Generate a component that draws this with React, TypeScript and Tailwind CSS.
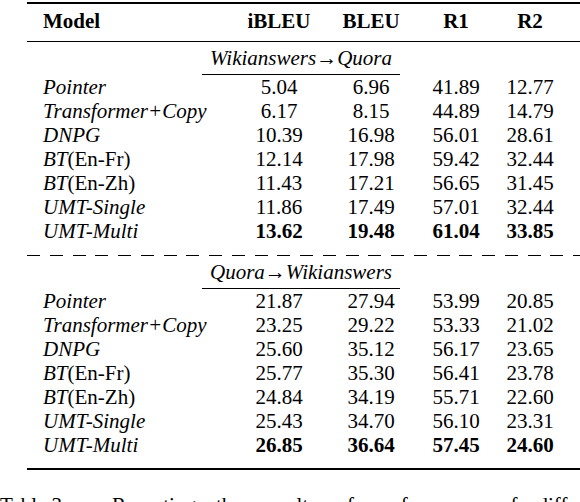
import React from "react";

type Row = { name: React.ReactNode; vals: string[] };

const rows1: Row[] = [
  { name: <i>Pointer</i>, vals: ["5.04", "6.96", "41.89", "12.77"] },
  { name: <i>Transformer+Copy</i>, vals: ["6.17", "8.15", "44.89", "14.79"] },
  { name: <i>DNPG</i>, vals: ["10.39", "16.98", "56.01", "28.61"] },
  { name: <><i>BT</i>(En-Fr)</>, vals: ["12.14", "17.98", "59.42", "32.44"] },
  { name: <><i>BT</i>(En-Zh)</>, vals: ["11.43", "17.21", "56.65", "31.45"] },
  { name: <i>UMT-Single</i>, vals: ["11.86", "17.49", "57.01", "32.44"] },
  { name: <i>UMT-Multi</i>, vals: ["13.62", "19.48", "61.04", "33.85"] },
];

const rows2: Row[] = [
  { name: <i>Pointer</i>, vals: ["21.87", "27.94", "53.99", "20.85"] },
  { name: <i>Transformer+Copy</i>, vals: ["23.25", "29.22", "53.33", "21.02"] },
  { name: <i>DNPG</i>, vals: ["25.60", "35.12", "56.17", "23.65"] },
  { name: <><i>BT</i>(En-Fr)</>, vals: ["25.77", "35.30", "56.41", "23.78"] },
  { name: <><i>BT</i>(En-Zh)</>, vals: ["24.84", "34.19", "55.71", "22.60"] },
  { name: <i>UMT-Single</i>, vals: ["25.43", "34.70", "56.10", "23.31"] },
  { name: <i>UMT-Multi</i>, vals: ["26.85", "36.64", "57.45", "24.60"] },
];

const cols = "grid grid-cols-[200px_104px_80px_90px_58px]";
const serif = { fontFamily: "'Liberation Serif', 'Times New Roman', serif" };

function DataRows({ rows }: { rows: Row[] }) {
  return (
    <div className="flex flex-col">
      {rows.map((r, i) => {
        const last = i === rows.length - 1;
        return (
          <div key={i} className={`${cols} h-[24px]`}>
            <div className="pl-[16px] whitespace-nowrap">{r.name}</div>
            {r.vals.map((v, j) => (
              <div key={j} className={last ? "text-center font-bold" : "text-center"}>
                {v}
              </div>
            ))}
          </div>
        );
      })}
    </div>
  );
}

function Label({ a, b }: { a: string; b: string }) {
  return (
    <div className="pt-[4px] flex">
      <div className="ml-[175px] w-[198px] border-b border-black pb-[4px] text-center h-[29px] whitespace-nowrap">
        <i>{a}</i>
        <span>{"\u2192"}</span>
        <i>{b}</i>
      </div>
    </div>
  );
}

function Dashes() {
  return (
    <div className="mt-[12px] flex gap-[9.75px] overflow-hidden h-[1px]">
      {Array.from({ length: 27 }).map((_, i) => (
        <div key={i} className="w-[13px] h-[1px] bg-black shrink-0" />
      ))}
    </div>
  );
}

const caption = ["Reporting", "the", "results", "of", "performance", "of", "different"];

export default function App() {
  return (
    <div style={serif} className="w-[580px] h-[502px] overflow-hidden bg-white text-black text-[21px] leading-[24px]">
      <div className="ml-[27px] w-[573px] pt-[2px] flex flex-col">
        <div className="border-t-2 border-black" />
        <div className={`${cols} pt-[5px] pb-[8px] font-bold border-b border-black`}>
          <div className="pl-[16px]">Model</div>
          <div className="text-center">iBLEU</div>
          <div className="text-center">BLEU</div>
          <div className="text-center">R1</div>
          <div className="text-center">R2</div>
        </div>
        <Label a="Wikianswers" b="Quora" />
        <DataRows rows={rows1} />
        <Dashes />
        <Label a="Quora" b="Wikianswers" />
        <DataRows rows={rows2} />
        <div className="mt-[11px] border-t-2 border-black" />
      </div>
      <div className="mt-[23px] flex gap-[20px] whitespace-nowrap">
        <span className="mr-[24px]">Table 3:</span>
        {caption.map((w, i) => (
          <span key={i}>{w}</span>
        ))}
      </div>
    </div>
  );
}
